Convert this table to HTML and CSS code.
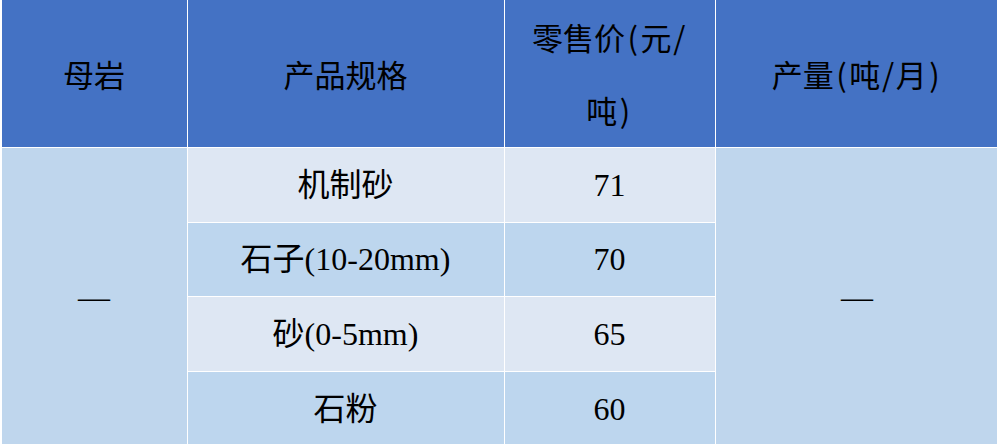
FILE: index.html
```html
<!DOCTYPE html>
<html lang="zh">
<head>
<meta charset="utf-8">
<title>产品价格表</title>
<link rel="stylesheet" href="styles.css">
</head>
<body>
<table class="price-table">
  <colgroup>
    <col class="c1">
    <col class="c2">
    <col class="c3">
    <col class="c4">
  </colgroup>
  <thead>
    <tr class="head-row">
      <th>母岩</th>
      <th>产品规格</th>
      <th>零售价<span class="hw">(</span>元<span class="hw">/</span><br>吨<span class="hw">)</span></th>
      <th>产量<span class="hw">(</span>吨<span class="hw">/</span>月<span class="hw">)</span></th>
    </tr>
  </thead>
  <tbody>
    <tr class="row light r1">
      <td class="merged" rowspan="4">—</td>
      <td>机制砂</td>
      <td>71</td>
      <td class="merged" rowspan="4">—</td>
    </tr>
    <tr class="row dark r2">
      <td>石子(10-20mm)</td>
      <td>70</td>
    </tr>
    <tr class="row light r3">
      <td>砂(0-5mm)</td>
      <td>65</td>
    </tr>
    <tr class="row dark r4">
      <td>石粉</td>
      <td>60</td>
    </tr>
  </tbody>
</table>
</body>
</html>
```

FILE: styles.css
```css
html, body {
  margin: 0;
  padding: 0;
  background: #ffffff;
  overflow: hidden;
}

.price-table {
  border-collapse: collapse;
  table-layout: fixed;
  width: 998px;
  margin-left: 0.5px;
}

.c1 { width: 186px; }
.c2 { width: 317px; }
.c3 { width: 211px; }
.c4 { width: 284px; }

.price-table th,
.price-table td {
  border: 1.5px solid #ffffff;
  padding: 0;
  text-align: center;
  vertical-align: middle;
  color: #000000;
}

.price-table tr:first-child th { border-top: none; }

.head-row {
  height: 147px;
  background: #4472c4;
}

.head-row th {
  font-family: "Noto Sans CJK SC", "Noto Sans", sans-serif;
  font-weight: 400;
  font-size: 31px;
  line-height: 73px;
}

.hw {
  display: inline-block;
  width: 0.5em;
  text-align: center;
}

.row td {
  font-family: "Liberation Serif", "Noto Sans CJK SC", serif;
  font-size: 32px;
  line-height: 36px;
}

.r1 { height: 75px; }
.r2 { height: 74px; }
.r3 { height: 75px; }
.r4 { height: 75px; }

.light td { background: #dee7f3; }
.dark td { background: #bdd6ee; }

.price-table td.merged {
  background: #bfd6ed;
}
```
